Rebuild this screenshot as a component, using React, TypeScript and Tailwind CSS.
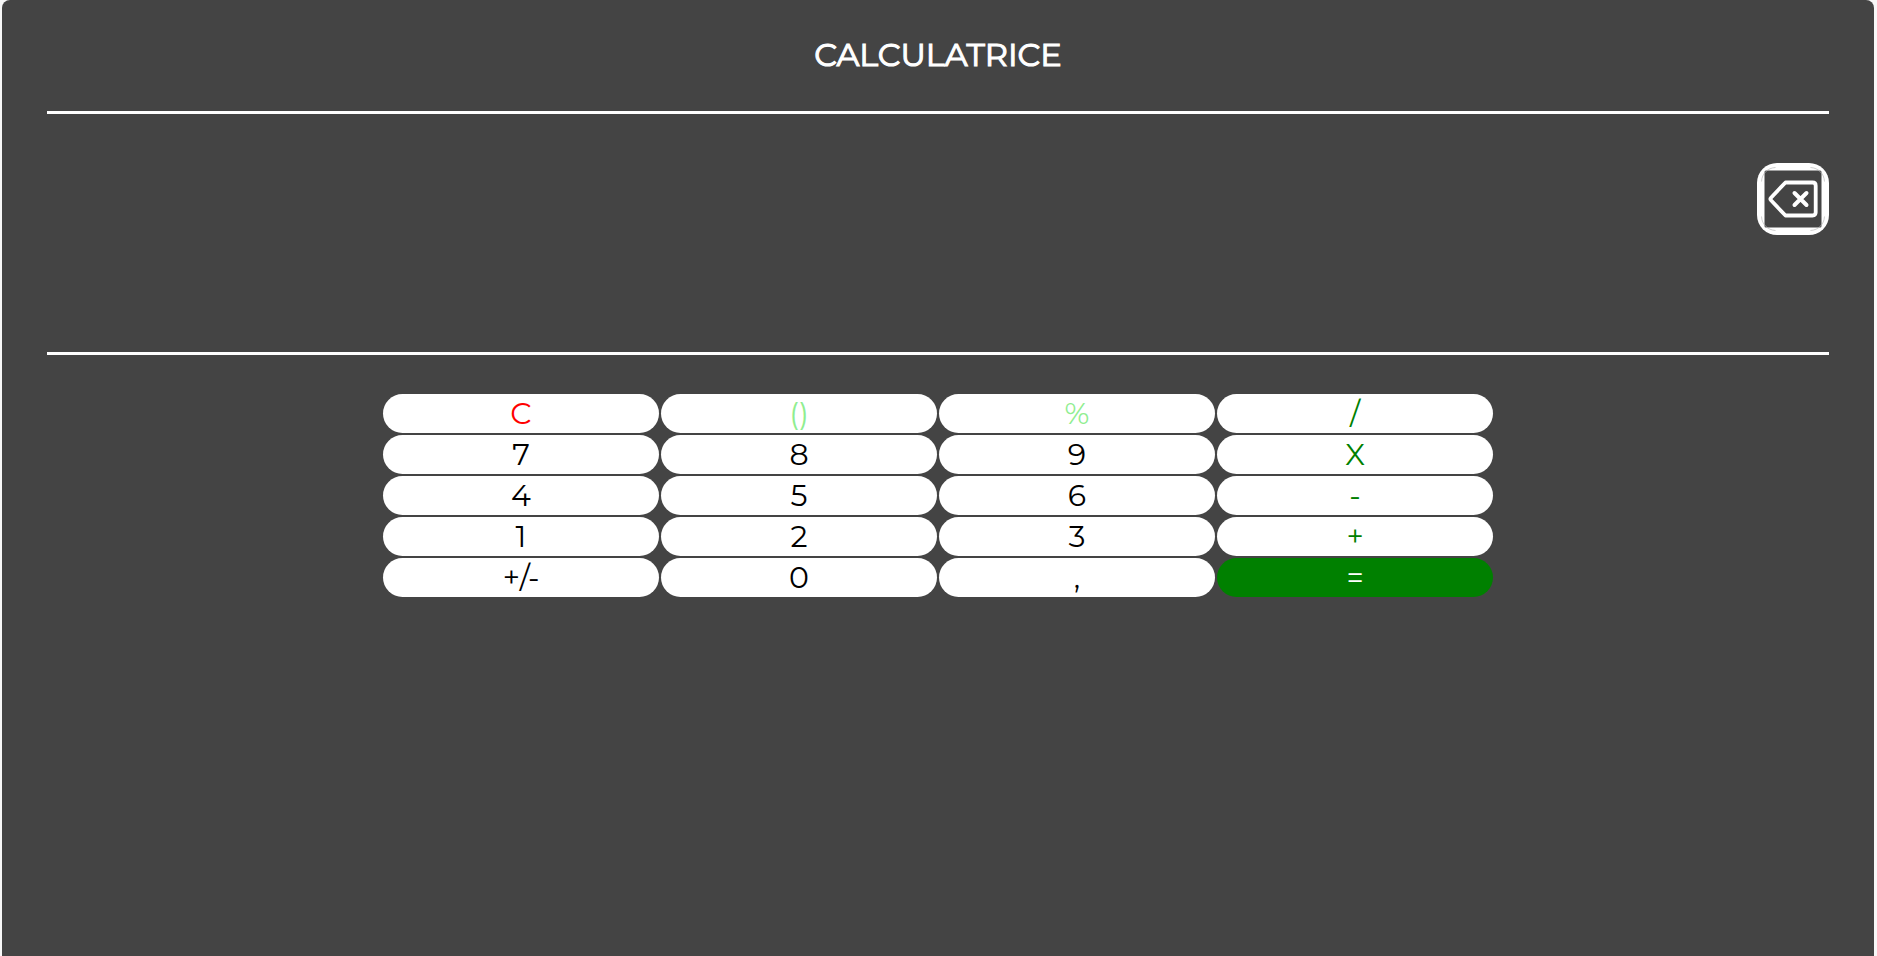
import React from "react";

type Key = { label: string; tone: string };

const white = "bg-white text-black";
const operator = "bg-white text-[#008000]";
const soft = "bg-white text-[#90ee90]";

const keys: Key[] = [
  { label: "C", tone: "bg-white text-[#ff0000]" },
  { label: "()", tone: soft },
  { label: "%", tone: soft },
  { label: "/", tone: operator },
  { label: "7", tone: white },
  { label: "8", tone: white },
  { label: "9", tone: white },
  { label: "X", tone: operator },
  { label: "4", tone: white },
  { label: "5", tone: white },
  { label: "6", tone: white },
  { label: "-", tone: operator },
  { label: "1", tone: white },
  { label: "2", tone: white },
  { label: "3", tone: white },
  { label: "+", tone: operator },
  { label: "+/-", tone: white },
  { label: "0", tone: white },
  { label: ",", tone: white },
  { label: "=", tone: "bg-[#008000] text-white" },
];

function BackspaceIcon() {
  return (
    <svg width="72" height="72" viewBox="0 0 72 72" fill="none">
      <rect width="72" height="72" rx="20" fill="#fff" />
      <rect x="7.5" y="7.5" width="57" height="57" rx="1.5" fill="#444" />
      <path d="M4.5 18.5C5 10.5 10.5 5 18.500 4.500M53.500 4.500C61.500 5 67 10.500 67.500 18.500M67.500 53.500C67 61.500 61.500 67 53.500 67.500M18.500 67.500C10.500 67 5 61.500 4.500 53.500" stroke="#bbb" strokeWidth="0.700" />
      <path d="M28.500 19.500H55.500Q58.700 19.500 58.700 22.700V49.300Q58.700 52.500 55.500 52.500H28.500L14 37.300Q12.800 36 14 34.700Z" stroke="#fff" strokeWidth="3.800" strokeLinejoin="round" />
      <path d="M37.500 30L49.500 42M49.500 30L37.500 42" stroke="#fff" strokeWidth="4" strokeLinecap="round" />
    </svg>
  );
}

export default function App() {
  return (
    <div className="h-[956px] overflow-hidden bg-[#f8f8f8] pl-[2px] pr-[3px] font-['Montserrat','Inter',sans-serif]">
      <main className="flex h-full flex-col rounded-t-[8px] bg-[#444444] px-[45px]">
        <header className="flex h-[114px] items-center justify-center border-b-[3px] border-white">
          <h1 className="pb-[1px] text-[32px] leading-[40px] font-normal text-white [-webkit-text-stroke:1.1px_white]">CALCULATRICE</h1>
        </header>
        <section className="flex h-[241px] items-start justify-end border-b-[3px] border-white pt-[49px]">
          <button type="button" aria-label="Effacer">
            <BackspaceIcon />
          </button>
        </section>
        <section className="mt-[39px] ml-[336px] grid w-[1110px] grid-cols-4 gap-[2px]">
          {keys.map((key) => (
            <button
              key={key.label}
              type="button"
              className={`flex h-[39px] items-center justify-center rounded-[20px] text-[30px] leading-[37px] font-normal ${key.tone}`}
            >
              {key.label}
            </button>
          ))}
        </section>
      </main>
    </div>
  );
}
